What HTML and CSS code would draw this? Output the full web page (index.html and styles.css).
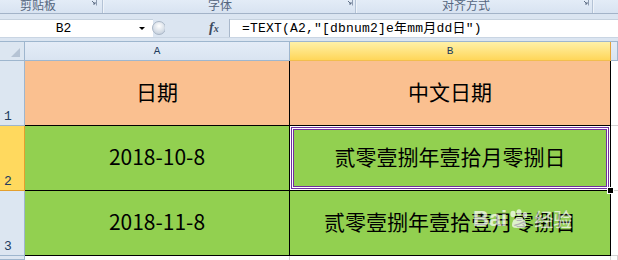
FILE: index.html
```html
<!DOCTYPE html>
<html lang="zh-CN">
<head>
    <meta charset="UTF-8">
    <title>TEXT dbnum2</title>
    <link rel="stylesheet" href="styles.css">
</head>
<body>
    <div class="ribbon">
        <div class="group group-clip">
            <span class="group-label">剪贴板</span>
            <svg class="launcher" width="8" height="8" viewBox="0 0 8 8"><path d="M0.5 0.5h7v7" fill="none" stroke="#8d9bb0"/><path d="M3 3l3 3M4 6h2V4" fill="none" stroke="#5f6f86"/></svg>
        </div>
        <div class="group group-font">
            <span class="group-label">字体</span>
            <svg class="launcher" width="8" height="8" viewBox="0 0 8 8"><path d="M0.5 0.5h7v7" fill="none" stroke="#8d9bb0"/><path d="M3 3l3 3M4 6h2V4" fill="none" stroke="#5f6f86"/></svg>
        </div>
        <div class="group group-align">
            <span class="group-label">对齐方式</span>
            <svg class="launcher" width="8" height="8" viewBox="0 0 8 8"><path d="M0.5 0.5h7v7" fill="none" stroke="#8d9bb0"/><path d="M3 3l3 3M4 6h2V4" fill="none" stroke="#5f6f86"/></svg>
        </div>
        <div class="group group-rest"></div>
    </div>
    <div class="ribbon-gap"></div>

    <div class="formula-bar">
        <div class="name-box">
            <span class="name">B2</span>
            <span class="caret"></span>
        </div>
        <div class="fx-area">
            <svg class="splitter" width="14" height="16" viewBox="0 0 14 16">
                <defs>
                    <radialGradient id="knob" cx="0.5" cy="0.35" r="0.6">
                        <stop offset="0" stop-color="#ffffff"/>
                        <stop offset="1" stop-color="#c9d3df"/>
                    </radialGradient>
                </defs>
                <circle cx="8" cy="8" r="6.5" fill="url(#knob)" stroke="#a9b6c6"/>
            </svg>
            <span class="fx">f<small>x</small></span>
        </div>
        <div class="formula">=TEXT(A2,"[dbnum2]e年mm月dd日")</div>
    </div>
    <div class="bar-gap"></div>

    <div class="sheet">
        <div class="corner"><span class="corner-mark"></span></div>
        <div class="col-head">A</div>
        <div class="col-head active">B</div>
        <div class="col-head"></div>

        <div class="row-head">1</div>
        <div class="cell peach">日期</div>
        <div class="cell peach">中文日期</div>
        <div class="cell blank"></div>

        <div class="row-head active">2</div>
        <div class="cell green">2018-10-8</div>
        <div class="cell green selected">贰零壹捌年壹拾月零捌日<span class="handle"></span></div>
        <div class="cell blank"></div>

        <div class="row-head">3</div>
        <div class="cell green">2018-11-8</div>
        <div class="cell green">贰零壹捌年壹拾壹月零捌日</div>
        <div class="cell blank"></div>

        <div class="row-head"></div>
        <div class="cell empty"></div>
        <div class="cell empty"></div>
        <div class="cell empty"></div>

        <div class="watermark">Bai<svg width="22" height="20" viewBox="0 0 22 20"><ellipse cx="5" cy="5" rx="2.6" ry="3.2" fill="#fff"/><ellipse cx="11" cy="3.5" rx="2.6" ry="3.2" fill="#fff"/><ellipse cx="17" cy="6" rx="2.4" ry="3" fill="#fff"/><path d="M4 16c0-5 4-8 7-8s7 3 7 8c0 3-3 3-7 3s-7 0-7-3z" fill="#fff"/></svg><span class="wm-cn">经验</span></div>
    </div>
</body>
</html>
```

FILE: styles.css
```css
* {
    margin: 0;
    padding: 0;
    box-sizing: border-box;
}

body {
    width: 618px;
    height: 260px;
    overflow: hidden;
    background-color: #ffffff;
    font-family: 'Noto Sans CJK SC', sans-serif;
}

/* Ribbon group captions */
.ribbon {
    height: 14px;
    display: flex;
    background: linear-gradient(#e3ecf7, #d8e3f1);
    border-bottom: 1px solid #a3b3c8;
}

.group {
    height: 13px;
    display: flex;
    align-items: flex-start;
    overflow: hidden;
    border-right: 1px solid #b4c3d6;
    box-shadow: 1px 0 0 #eef3f9;
}

.group-label {
    margin-top: -2px;
    font-size: 12px;
    line-height: 14px;
    color: #55667e;
}

.launcher {
    margin-left: auto;
    margin-top: -2px;
}

.group-clip {
    width: 103px;
    padding-left: 20px;
    padding-right: 5px;
}

.group-font {
    width: 253px;
    padding-left: 105px;
    padding-right: 2px;
}

.group-align {
    width: 237px;
    padding-left: 86px;
    padding-right: 3px;
}

.group-rest {
    flex: 1;
    border-right: none;
}

.ribbon-gap {
    height: 5px;
    background-color: #dbe5f1;
}

/* Name box + formula */
.formula-bar {
    height: 18px;
    display: flex;
    background-color: #dbe5f1;
}

.name-box {
    width: 153px;
    background-color: #ffffff;
    border-top: 1px solid #c5d1de;
    display: flex;
    align-items: center;
}

.name {
    width: 127px;
    text-align: center;
    font-family: 'Liberation Mono', monospace;
    font-size: 13px;
    line-height: 16px;
    color: #000000;
}

.caret {
    margin-left: 12px;
    width: 0;
    height: 0;
    border-left: 3px solid transparent;
    border-right: 3px solid transparent;
    border-top: 3px solid #000000;
}

.fx-area {
    width: 77px;
    display: flex;
    align-items: center;
    border-right: 1px solid #a9b8cb;
}

.splitter {
    margin-left: -2px;
}

.fx {
    margin-left: 44px;
    font-family: 'Liberation Serif', serif;
    font-style: italic;
    font-weight: bold;
    font-size: 14px;
    line-height: 16px;
    color: #3c4a5f;
}

.fx small {
    font-size: 10px;
}

.formula {
    flex: 1;
    background-color: #ffffff;
    border-top: 1px solid #c5d1de;
    padding-left: 12px;
    font-family: 'Liberation Mono', 'Noto Sans CJK SC', monospace;
    font-size: 13px;
    line-height: 17px;
    letter-spacing: 0.2px;
    color: #000000;
    white-space: nowrap;
}

.bar-gap {
    height: 4px;
    background-color: #dbe5f1;
    border-top: 1px solid #c9d5e3;
}

/* Worksheet grid */
.sheet {
    position: relative;
    height: 219px;
    display: grid;
    grid-template-columns: 25px 265px 321px 1fr;
    grid-template-rows: 19px 65px 65px 65px 1fr;
    border-top: 1px solid #9eb6ce;
}

.corner {
    background-color: #dce6f1;
    border-right: 1px solid #9eb6ce;
    border-bottom: 1px solid #9eb6ce;
    position: relative;
}

.corner-mark {
    position: absolute;
    right: 4px;
    bottom: 3px;
    width: 0;
    height: 0;
    border-left: 9px solid transparent;
    border-bottom: 9px solid #b5c3d4;
}

.col-head {
    background: linear-gradient(#e4ecf7, #d9e4f1);
    border-right: 1px solid #9eb6ce;
    border-bottom: 1px solid #9eb6ce;
    display: flex;
    justify-content: center;
    align-items: center;
    font-family: 'Liberation Mono', monospace;
    font-size: 11px;
    color: #223c5e;
}

.col-head.active {
    background: linear-gradient(#fff1a8, #ffd659);
    border-right-color: #e3a23a;
    border-bottom-color: #f2bd4e;
}

.row-head {
    background-color: #dce6f1;
    border-right: 1px solid #9eb6ce;
    border-bottom: 1px solid #9eb6ce;
    display: flex;
    align-items: flex-end;
    padding-left: 4px;
    padding-bottom: 1px;
    font-family: 'Liberation Mono', monospace;
    font-size: 13px;
    line-height: 14px;
    color: #223c5e;
}

.row-head.active {
    background-color: #ffd95e;
    border-right-color: #e39f2e;
    border-bottom-color: #e39f2e;
}

.cell {
    border-right: 1px solid #000000;
    border-bottom: 1px solid #000000;
    display: flex;
    justify-content: center;
    align-items: center;
    padding-bottom: 4px;
    font-size: 21px;
    color: #000000;
    white-space: nowrap;
}

.peach {
    background-color: #fac090;
}

.green {
    background-color: #92d050;
}

.blank {
    border-right: none;
    border-bottom: 1px solid #d4d4d4;
}

.empty {
    border-right: 1px solid #d4d4d4;
    border-bottom: none;
}

.selected {
    position: relative;
    box-shadow: inset 0 0 0 1px #ffffff, inset 0 0 0 2px #7030a0, inset 0 0 0 3px #ffffff, inset 0 0 0 4px #7030a0;
}

.handle {
    position: absolute;
    right: -4px;
    bottom: -4px;
    width: 7px;
    height: 7px;
    background-color: #000000;
    border: 1px solid #ffffff;
}

/* Site watermark */
.watermark {
    position: absolute;
    left: 473px;
    top: 163px;
    display: flex;
    align-items: center;
    gap: 1px;
    font-family: 'Liberation Sans', sans-serif;
    font-weight: bold;
    font-size: 22px;
    color: #ffffff;
    opacity: 0.7;
    text-shadow: 0 0 1px #9a9a9a;
}

.wm-cn {
    margin-left: 3px;
    font-family: 'Noto Sans CJK SC', sans-serif;
    font-size: 19px;
    font-weight: normal;
}
```
